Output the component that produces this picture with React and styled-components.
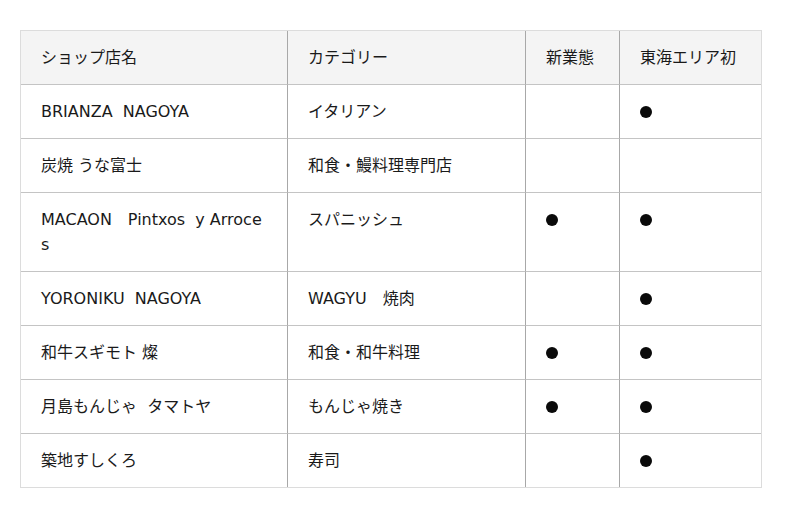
import React from 'react'
import styled, { createGlobalStyle } from 'styled-components'

const GlobalStyle = createGlobalStyle`
  html, body {
    margin: 0;
    padding: 0;
    background: #fff;
  }
  body {
    font-family: "DejaVu Sans", "Noto Sans CJK JP", sans-serif;
    color: #1a1a1a;
  }
`

const Page = styled.div`
  padding: 30px 20px;
`

const Table = styled.table`
  width: 742px;
  table-layout: fixed;
  border-collapse: separate;
  border-spacing: 0;
  border: 1px solid #dcdcdc;
  font-size: 16px;
  line-height: 25px;
`

const Row = styled.tr`
  &:not(:last-child) > * {
    border-bottom: 1px solid #c4c4c4;
  }
`

const Cell = styled.td`
  padding: 14px 20px;
  text-align: left;
  vertical-align: top;
  font-weight: normal;
  word-break: break-all;
  background: #fff;

  &:not(:last-child) {
    border-right: 1px solid #a8a8a8;
  }
`

const HeadCell = styled(Cell).attrs({ as: 'th' })`
  background: #f4f4f4;
  border-bottom: 1px solid #c4c4c4;
`

const Dot = styled.span`
  display: inline-block;
  width: 12px;
  height: 12px;
  border-radius: 50%;
  background: #0a0a0a;
  vertical-align: -1px;
`

const rows = [
  ['BRIANZA\u00a0 NAGOYA', 'イタリアン', false, true],
  ['炭焼 うな富士', '和食・鰻料理専門店', false, false],
  ['MACAON\u3000Pintxos\u00a0 y Arroces', 'スパニッシュ', true, true],
  ['YORONIKU\u00a0 NAGOYA', 'WAGYU\u3000焼肉', false, true],
  ['和牛スギモト 燦', '和食・和牛料理', true, true],
  ['月島もんじゃ\u00a0 タマトヤ', 'もんじゃ焼き', true, true],
  ['築地すしくろ', '寿司', false, true],
]

export default function App() {
  return (
    <Page>
      <GlobalStyle />
      <Table>
        <colgroup>
          <col style={{ width: 267 }} />
          <col style={{ width: 238 }} />
          <col style={{ width: 94 }} />
          <col />
        </colgroup>
        <thead>
          <tr>
            <HeadCell>ショップ店名</HeadCell>
            <HeadCell>カテゴリー</HeadCell>
            <HeadCell>新業態</HeadCell>
            <HeadCell>東海エリア初</HeadCell>
          </tr>
        </thead>
        <tbody>
          {rows.map(([name, cat, isNew, isFirst], i) => (
            <Row key={i}>
              <Cell>{name}</Cell>
              <Cell>{cat}</Cell>
              <Cell>{isNew && <Dot />}</Cell>
              <Cell>{isFirst && <Dot />}</Cell>
            </Row>
          ))}
        </tbody>
      </Table>
    </Page>
  )
}
